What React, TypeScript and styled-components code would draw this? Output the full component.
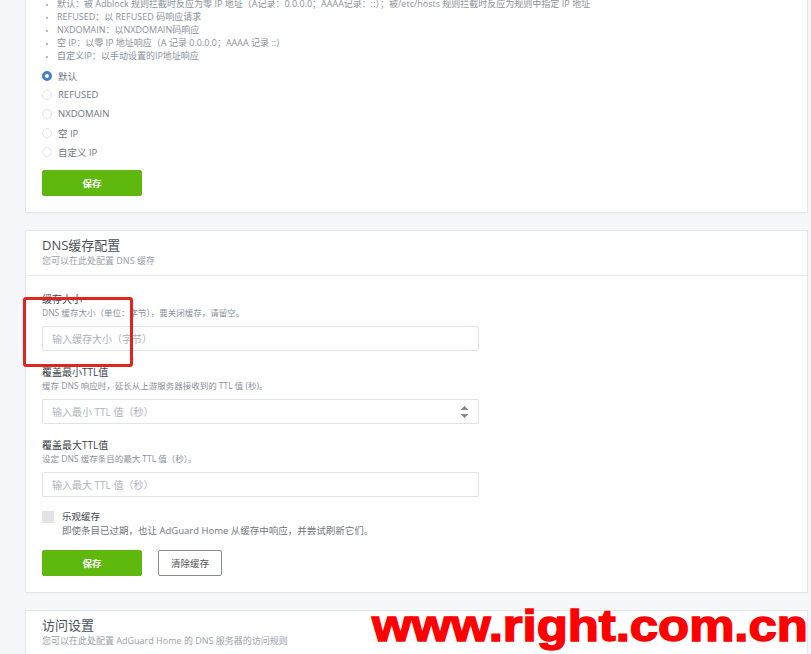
import React from "react"
import styled, { createGlobalStyle } from "styled-components"

const GlobalStyle = createGlobalStyle`
  html, body {
    margin: 0;
    padding: 0;
    background: #f5f7fb;
    font-family: "Open Sans", "Noto Sans CJK SC", sans-serif;
    color: #495057;
    overflow: hidden;
  }
  input[type=number]::-webkit-inner-spin-button {
    opacity: 1;
  }
`

const Page = styled.div`
  position: relative;
  width: 811px;
  height: 654px;
  padding: 0 3px 0 25px;
  box-sizing: border-box;
  display: flex;
  flex-direction: column;
  gap: 17px;
`

const Card = styled.section<{ $top?: boolean }>`
  background: #fff;
  border: 1px solid #e3e6ea;
  border-top: ${p => (p.$top ? "none" : "1px solid #e3e6ea")};
  box-shadow: 0 1px 2px rgba(0, 0, 0, 0.03);
`

const CardHeader = styled.div`
  padding: 5px 16px 7px;
  border-bottom: 1px solid #e8eaed;
`

const CardTitle = styled.div`
  font-size: 13px;
  line-height: 18px;
  color: #495057;
`

const CardSub = styled.div`
  font-size: 9px;
  line-height: 14px;
  color: #9aa0ac;
`

const CardBody = styled.div<{ $pt?: number }>`
  padding: ${p => p.$pt ?? 16}px 16px 16px;
  display: flex;
  flex-direction: column;
`

const BulletList = styled.ul`
  margin: -3px 0 0;
  padding: 0 0 0 15px;
  font-size: 9px;
  line-height: 13px;
  color: #8a9099;
  li::marker {
    font-size: 7px;
    color: #9aa0ac;
  }
`

const RadioGroup = styled.div`
  margin-top: 4px;
  display: flex;
  flex-direction: column;
`

const RadioRow = styled.label`
  height: 19px;
  display: flex;
  align-items: center;
  gap: 6px;
  font-size: 9.5px;
  color: #6e7681;
`

const RadioDot = styled.span<{ $on?: boolean }>`
  width: 10px;
  height: 10px;
  border-radius: 50%;
  box-sizing: border-box;
  border: ${p => (p.$on ? "3px solid #467fcf" : "1px solid #e1e4e8")};
  background: #fff;
`

const Buttons = styled.div<{ $mt: number }>`
  margin-top: ${p => p.$mt}px;
  display: flex;
  gap: 16px;
`

const Button = styled.button<{ $primary?: boolean }>`
  height: 26px;
  width: ${p => (p.$primary ? "100px" : "64px")};
  border-radius: 2px;
  font-family: inherit;
  font-size: 9.5px;
  font-weight: ${p => (p.$primary ? 700 : 400)};
  color: ${p => (p.$primary ? "#fff" : "#555")};
  background: ${p => (p.$primary ? "#5eb80e" : "#fff")};
  border: 1px solid ${p => (p.$primary ? "#5eb80e" : "#8c8c8c")};
  padding: 0;
`

const Field = styled.div<{ $mt?: number }>`
  margin-top: ${p => p.$mt ?? 0}px;
  display: flex;
  flex-direction: column;
  width: 437px;
`

const Label = styled.div`
  font-size: 10px;
  line-height: 14px;
  color: #3d434a;
`

const Help = styled.div`
  font-size: 8.5px;
  line-height: 14px;
  color: #8a9099;
`

const Input = styled.input`
  margin-top: 6px;
  height: 25px;
  box-sizing: border-box;
  border: 1px solid #e0e3e7;
  border-radius: 2px;
  padding: 0 6px 0 9px;
  font-family: inherit;
  font-size: 10px;
  color: #495057;
  outline: none;
  &::placeholder {
    color: #adb3ba;
  }
`

const CheckRow = styled.div`
  margin-top: 13px;
  display: flex;
  gap: 8px;
`

const Check = styled.span`
  width: 12px;
  height: 12px;
  margin-top: 1px;
  background: #e4e4e4;
`

const CheckText = styled.div`
  display: flex;
  flex-direction: column;
  font-size: 9.5px;
  line-height: 14px;
  color: #3d434a;
`

const CheckHelp = styled.span`
  color: #6e7681;
`

const Highlight = styled.div`
  position: absolute;
  left: 23px;
  top: 297px;
  width: 110px;
  height: 70px;
  box-sizing: border-box;
  border: 3px solid #e0241f;
  border-radius: 3px;
`

const Watermark = styled.div`
  position: absolute;
  left: 372px;
  top: 604px;
  font-family: "Liberation Sans", Arial, sans-serif;
  font-weight: 700;
  font-size: 44px;
  line-height: 44px;
  color: #ff0000;
  -webkit-text-stroke: 1.5px #ff0000;
  transform: scaleX(1.155);
  transform-origin: left center;
  white-space: nowrap;
`

const modes = [
  "默认：被 Adblock 规则拦截时反应为零 IP 地址（A记录：0.0.0.0；AAAA记录：::）；被/etc/hosts 规则拦截时反应为规则中指定 IP 地址",
  "REFUSED：以 REFUSED 码响应请求",
  "NXDOMAIN：以NXDOMAIN码响应",
  "空 IP：以零 IP 地址响应（A 记录 0.0.0.0；AAAA 记录 ::）",
  "自定义IP：以手动设置的IP地址响应",
]

const radios = ["默认", "REFUSED", "NXDOMAIN", "空 IP", "自定义 IP"]

export default function App() {
  return (
    <>
      <GlobalStyle />
      <Page>
        <Card $top>
          <CardBody $pt={0}>
            <BulletList>
              {modes.map(m => (
                <li key={m}>{m}</li>
              ))}
            </BulletList>
            <RadioGroup>
              {radios.map((r, i) => (
                <RadioRow key={r}>
                  <RadioDot $on={i === 0} />
                  {r}
                </RadioRow>
              ))}
            </RadioGroup>
            <Buttons $mt={9}>
              <Button $primary>保存</Button>
            </Buttons>
          </CardBody>
        </Card>

        <Card>
          <CardHeader>
            <CardTitle>DNS缓存配置</CardTitle>
            <CardSub>您可以在此处配置 DNS 缓存</CardSub>
          </CardHeader>
          <CardBody>
            <Field>
              <Label>缓存大小</Label>
              <Help>DNS 缓存大小（单位：字节），要关闭缓存，请留空。</Help>
              <Input placeholder="输入缓存大小（字节）" />
            </Field>
            <Field $mt={14}>
              <Label>覆盖最小TTL值</Label>
              <Help>缓存 DNS 响应时，延长从上游服务器接收到的 TTL 值 (秒)。</Help>
              <Input type="number" placeholder="输入最小 TTL 值（秒）" />
            </Field>
            <Field $mt={14}>
              <Label>覆盖最大TTL值</Label>
              <Help>设定 DNS 缓存条目的最大 TTL 值（秒）。</Help>
              <Input placeholder="输入最大 TTL 值（秒）" />
            </Field>
            <CheckRow>
              <Check />
              <CheckText>
                <span>乐观缓存</span>
                <CheckHelp>即使条目已过期，也让 AdGuard Home 从缓存中响应，并尝试刷新它们。</CheckHelp>
              </CheckText>
            </CheckRow>
            <Buttons $mt={12}>
              <Button $primary>保存</Button>
              <Button>清除缓存</Button>
            </Buttons>
          </CardBody>
        </Card>

        <Card>
          <CardHeader>
            <CardTitle>访问设置</CardTitle>
            <CardSub>您可以在此处配置 AdGuard Home 的 DNS 服务器的访问规则</CardSub>
          </CardHeader>
        </Card>

        <Highlight />
        <Watermark>www.right.com.cn</Watermark>
      </Page>
    </>
  )
}
